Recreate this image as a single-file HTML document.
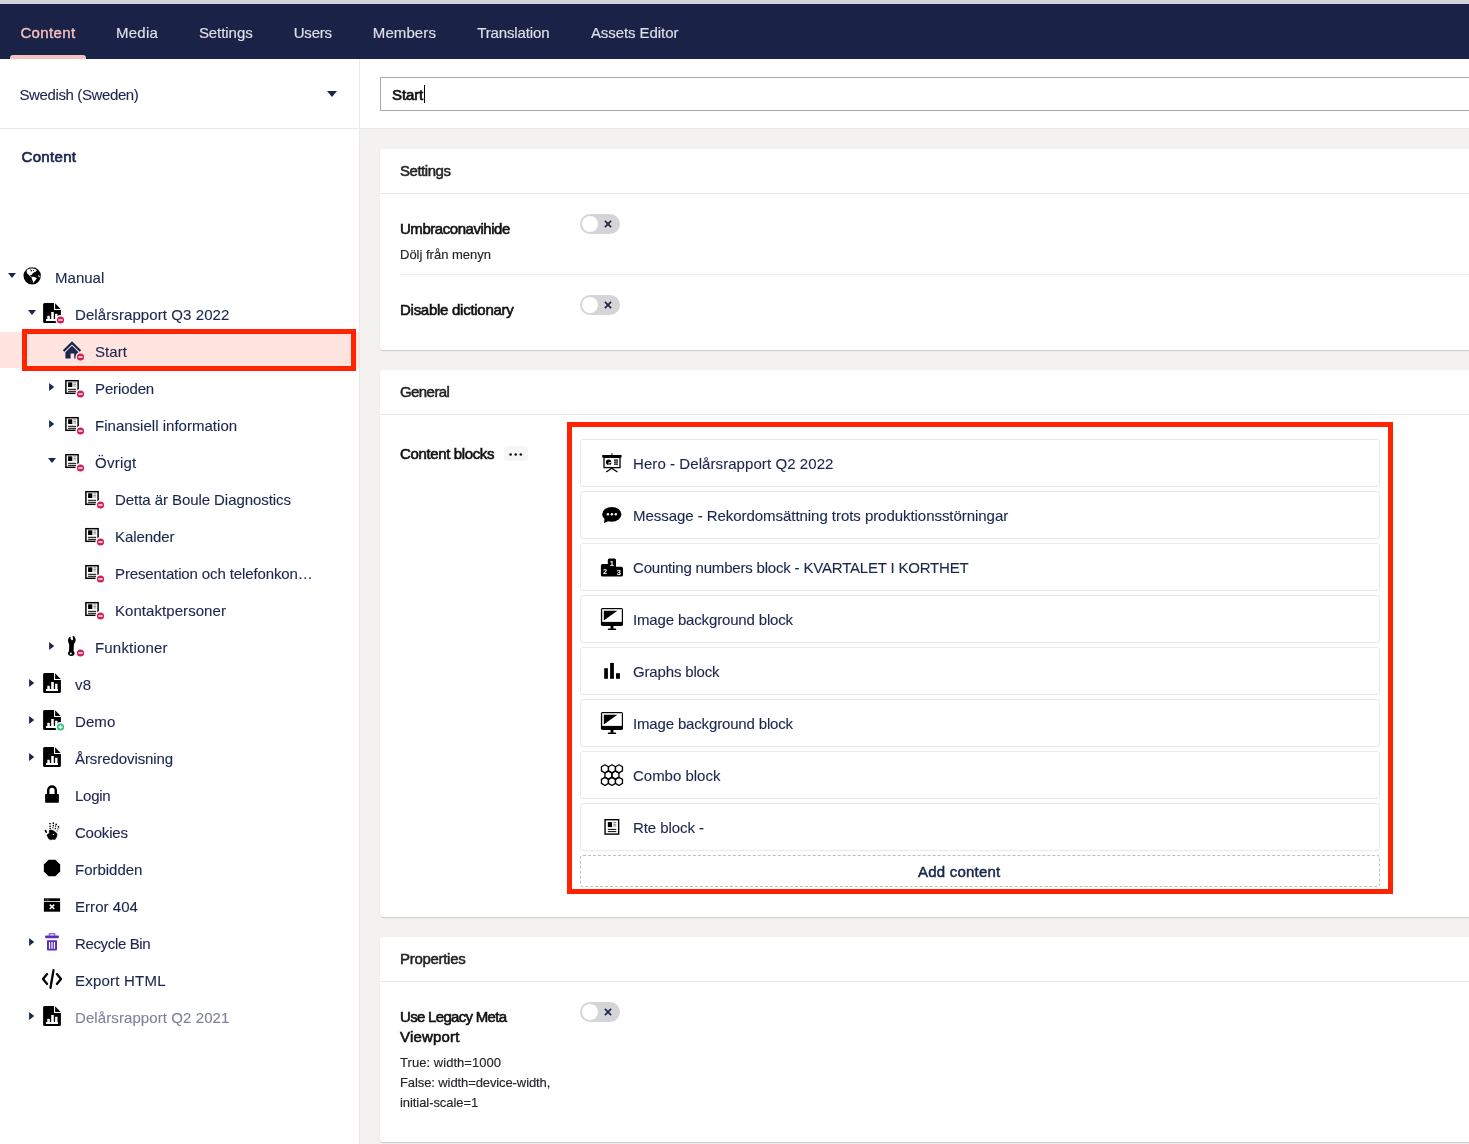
<!DOCTYPE html>
<html lang="en">
<head>
<meta charset="utf-8">
<title>Start - Umbraco</title>
<style>
*{box-sizing:border-box;margin:0;padding:0}
html,body{width:1469px;height:1144px;overflow:hidden;background:#f4f2f1}
#appheader,#sidebar,#tree,#main{will-change:transform}
body{font-family:"Liberation Sans",sans-serif;font-size:15px;color:#1b264f;position:relative}
#topstrip{position:absolute;left:0;top:0;width:1469px;height:4px;background:#d3d4da}
#appheader{position:absolute;left:0;top:4px;width:1469px;height:55px;background:#1b2248}
#appheader .tab{position:absolute;top:1px;height:55px;line-height:56px;color:#dfe0e6;font-size:15px;white-space:nowrap}
#appheader .tab{-webkit-text-stroke:0.15px}
#appheader .tab.active{color:#f5c1bc;-webkit-text-stroke:0.4px}
#appheader .bar{position:absolute;left:10px;top:51px;width:76px;height:4px;background:#f5c1bc;border-radius:3px 3px 0 0}
#sidebar{position:absolute;left:0;top:59px;width:360px;height:1085px;background:#fff;border-right:1px solid #e9e9eb}
#lang{position:absolute;left:0;top:0;width:359px;height:70px;border-bottom:1px solid #e9e9eb}
#lang span{position:absolute;left:19.5px;top:27px;line-height:18px;white-space:nowrap;-webkit-text-stroke:0.12px}
#lang i{position:absolute;left:327px;top:32px;width:0;height:0;border-left:5px solid transparent;border-right:5px solid transparent;border-top:6px solid #1b264f}
#treehead{position:absolute;left:21.5px;top:89px;line-height:18px;-webkit-text-stroke:0.7px #1b264f;white-space:nowrap}
#tree{position:absolute;left:0;top:0;width:359px;height:1144px}
#tree .lbl{position:absolute;line-height:18px;white-space:nowrap;-webkit-text-stroke:0.12px}
#tree .lbl.muted{color:#7d839a}
#tree .selrow{position:absolute;left:0;width:359px;height:36px;background:#ffe4e0}
svg.layer{position:absolute;left:0;top:0;overflow:visible}
#main{position:absolute;left:0;top:0;width:1469px;height:1144px;overflow:hidden;pointer-events:none}
#edhead{position:absolute;left:360px;top:59px;width:1109px;height:70px;background:#fff;border-bottom:1px solid #e9e9eb}
#nameinput{position:absolute;left:380px;top:77px;width:1200px;height:34px;border:1px solid #a9a9b3;background:#fff}
#nameinput span{position:absolute;left:11px;top:8px;line-height:18px;color:#111;-webkit-text-stroke:0.7px #111;white-space:nowrap}
#nameinput i{position:absolute;left:43px;top:7px;width:1px;height:18px;background:#000}
.panel{position:absolute;left:380px;width:1200px;background:#fff;border-radius:3px;box-shadow:0 1px 1px 0 rgba(0,0,0,.16)}
.panel .ph{position:absolute;left:0;top:0;width:100%;height:45px;border-bottom:1px solid #e9e9eb}
.panel .ph span{position:absolute;left:20px;top:13px;line-height:18px;font-size:15px;color:#222;-webkit-text-stroke:0.5px #222;white-space:nowrap}
.plabel{position:absolute;left:400px;font-size:15px;line-height:20px;color:#111;-webkit-text-stroke:0.6px #111;white-space:nowrap}
.pdesc{position:absolute;left:400px;font-size:13px;line-height:20px;color:#25252a;white-space:nowrap;-webkit-text-stroke:0.15px #25252a}
.sep{position:absolute;left:400px;height:1px;width:1100px;background:#f0f0f1}
.toggle{position:absolute;width:40px;height:20px;border-radius:10px;background:#d5d5d8}
.toggle b{position:absolute;left:2px;top:2px;width:16px;height:16px;border-radius:8px;background:#fff}
.toggle svg{position:absolute;left:24px;top:6px}
.dots{position:absolute;left:504px;top:446px;width:24px;height:15px;border-radius:3px;background:#f6f6f7}
.dots svg{position:absolute;left:0;top:0}
.blk{position:absolute;left:580px;width:800px;height:48px;border:1px solid #e9e9eb;border-radius:3px;background:#fff}
.blk span{position:absolute;left:52px;top:15px;line-height:18px;white-space:nowrap;-webkit-text-stroke:0.12px}
.addc{position:absolute;left:580px;top:855px;width:800px;height:32px;border:1px dashed #bdbdc4;border-radius:3px;text-align:center}
.addc span{position:absolute;left:337px;top:7px;line-height:18px;white-space:nowrap;-webkit-text-stroke:0.5px #1b264f}
.redbox{position:absolute;border:5px solid #ff2300}

</style>
</head>
<body>
<div id="topstrip"></div>
<div id="appheader">
  <div class="tab active" style="left:20.4px;letter-spacing:0.376px">Content</div>
  <div class="tab" style="left:116.0px;letter-spacing:0.25px">Media</div>
  <div class="tab" style="left:198.9px;letter-spacing:-0.058px">Settings</div>
  <div class="tab" style="left:293.7px;letter-spacing:-0.193px">Users</div>
  <div class="tab" style="left:372.8px;letter-spacing:0.097px">Members</div>
  <div class="tab" style="left:477.2px;letter-spacing:-0.126px">Translation</div>
  <div class="tab" style="left:590.9px;letter-spacing:-0.065px">Assets Editor</div>
  <div class="bar"></div>
</div>
<div id="sidebar">
  <div id="lang"><span style="letter-spacing:-0.384px">Swedish (Sweden)</span><i></i></div>
  <div id="treehead" style="letter-spacing:0.326px">Content</div>
</div>
<div id="tree">
<div class="lbl" style="left:55px;top:269px;letter-spacing:0.019px">Manual</div>
<div class="lbl" style="left:75px;top:306px;letter-spacing:0.09px">Delårsrapport Q3 2022</div>
<div class="selrow" style="top:332px"></div>
<div class="lbl" style="left:95px;top:343px;letter-spacing:0.053px">Start</div>
<div class="lbl" style="left:95px;top:380px;letter-spacing:-0.121px">Perioden</div>
<div class="lbl" style="left:95px;top:417px;letter-spacing:0.017px">Finansiell information</div>
<div class="lbl" style="left:95px;top:454px;letter-spacing:0.25px">Övrigt</div>
<div class="lbl" style="left:115px;top:491px;letter-spacing:-0.064px">Detta är Boule Diagnostics</div>
<div class="lbl" style="left:115px;top:528px;letter-spacing:-0.078px">Kalender</div>
<div class="lbl" style="left:115px;top:565px;letter-spacing:-0.117px">Presentation och telefonkon…</div>
<div class="lbl" style="left:115px;top:602px;letter-spacing:0.059px">Kontaktpersoner</div>
<div class="lbl" style="left:95px;top:639px;letter-spacing:0.181px">Funktioner</div>
<div class="lbl" style="left:75px;top:676px;letter-spacing:0.25px">v8</div>
<div class="lbl" style="left:75px;top:713px;letter-spacing:0.095px">Demo</div>
<div class="lbl" style="left:75px;top:750px;letter-spacing:-0.078px">Årsredovisning</div>
<div class="lbl" style="left:75px;top:787px;letter-spacing:-0.25px">Login</div>
<div class="lbl" style="left:75px;top:824px;letter-spacing:-0.217px">Cookies</div>
<div class="lbl" style="left:75px;top:861px;letter-spacing:-0.018px">Forbidden</div>
<div class="lbl" style="left:75px;top:898px;letter-spacing:0.046px">Error 404</div>
<div class="lbl" style="left:75px;top:935px;letter-spacing:-0.35px">Recycle Bin</div>
<div class="lbl" style="left:75px;top:972px;letter-spacing:0.214px">Export HTML</div>
<div class="lbl muted" style="left:75px;top:1009px;letter-spacing:0.09px">Delårsrapport Q2 2021</div>
<svg class="layer" width="360" height="1144" viewBox="0 0 360 1144">
<polygon points="8,273.0 16,273.0 12,278.1" fill="#1b264f"/>
<g transform="translate(32.2,275.8)"><circle r="8.7" fill="#000"/><path fill="#fff" d="M-5.7,-4.75L-4.5,-6.5L-2.2,-7.3L0.55,-7.2L3,-6.7L4.75,-5.6L3.7,-4.5L3.2,-3.8L1.9,-3.6L0.55,-2.65L-0.3,-1L-1.8,-0.85L-2.5,0L-5.05,-2.4Z"/><path stroke="#fff" stroke-width="0.8" fill="none" d="M-2.5,-0.2L-0.5,1.4"/><path fill="#fff" d="M-0.55,1.25L1.7,1L4.6,2.4L3.35,4.35L1.7,6.3L0.85,7.55L0.55,4.9L-0.4,2.95Z"/><circle cx="-0.9" cy="-5.1" r="0.75" fill="#000"/><circle cx="1.25" cy="-5.3" r="0.6" fill="#000"/><path d="M-2.6,-7.4L-1.6,-6.2" stroke="#000" stroke-width="0.7"/><path fill="#b0b0b0" d="M6.15,-1.25L7.1,-0.15L8.5,-0.15L8.1,1.4L6.4,1.4L5.9,0.4Z"/><path fill="none" stroke="#bbb" stroke-width="0.7" d="M-1.8,-8.2Q0,-8.9 1.8,-8.2"/></g>
<polygon points="28,310.0 36,310.0 32,315.1" fill="#1b264f"/>
<g transform="translate(52,313)"><path fill="#000" d="M-7.4,-10H2V-3H8.9V8.5Q8.9,10 7.4,10H-7.4Q-8.9,10 -8.9,8.5V-8.5Q-8.9,-10 -7.4,-10Z"/><path fill="#000" d="M3.1,-9.8L8.7,-4.1H3.1Z"/><path fill="#fff" d="M-4.7,2.7h2.5v3.5h-2.5zM-0.8,-1h2.6v7.2h-2.6zM3.1,0.8h2.4v5.4h-2.4zM-6,6.1H6V7.9H-6Z"/></g>
<circle cx="60.5" cy="320" r="5.1" fill="#fff"/><circle cx="60.5" cy="320" r="3.6" fill="#d42054"/><rect x="58.4" y="319.3" width="4.2" height="1.4" fill="#fff"/>
<g transform="translate(72,350)" fill="#1b264f"><path d="M0,-8.7L9.2,0.2L7.6,1.8L0,-5.6L-7.6,1.8L-9.2,0.2Z"/><path d="M0,-4.3L6.6,2.2V8.4H2.2V3.4H-1.4V8.4H-6.6V2.2Z"/></g>
<circle cx="80.5" cy="357" r="5.1" fill="#ffe4e0"/><circle cx="80.5" cy="357" r="3.6" fill="#d42054"/><rect x="78.4" y="356.3" width="4.2" height="1.4" fill="#fff"/>
<polygon points="49.1,382.9 54.2,387 49.1,391.1" fill="#1b264f"/>
<g transform="translate(72,387) scale(1.0)"><rect x="-6.1" y="-6.3" width="12.2" height="12.6" fill="#fff" stroke="#000" stroke-width="1.5"/><rect x="-3.9" y="-4.7" width="4.2" height="4.7" fill="#000"/><path stroke="#666" stroke-width="0.7" d="M1.4,-4.2H4.2M1.4,-2.6H4.2M1.4,-1H4.2"/><path stroke="#000" stroke-width="1" d="M-3.9,2.3H4.2M-3.9,4.3H4.2"/></g>
<circle cx="80.5" cy="394" r="5.1" fill="#fff"/><circle cx="80.5" cy="394" r="3.6" fill="#d42054"/><rect x="78.4" y="393.3" width="4.2" height="1.4" fill="#fff"/>
<polygon points="49.1,419.9 54.2,424 49.1,428.1" fill="#1b264f"/>
<g transform="translate(72,424) scale(1.0)"><rect x="-6.1" y="-6.3" width="12.2" height="12.6" fill="#fff" stroke="#000" stroke-width="1.5"/><rect x="-3.9" y="-4.7" width="4.2" height="4.7" fill="#000"/><path stroke="#666" stroke-width="0.7" d="M1.4,-4.2H4.2M1.4,-2.6H4.2M1.4,-1H4.2"/><path stroke="#000" stroke-width="1" d="M-3.9,2.3H4.2M-3.9,4.3H4.2"/></g>
<circle cx="80.5" cy="431" r="5.1" fill="#fff"/><circle cx="80.5" cy="431" r="3.6" fill="#d42054"/><rect x="78.4" y="430.3" width="4.2" height="1.4" fill="#fff"/>
<polygon points="48,458.0 56,458.0 52,463.1" fill="#1b264f"/>
<g transform="translate(72,461) scale(1.0)"><rect x="-6.1" y="-6.3" width="12.2" height="12.6" fill="#fff" stroke="#000" stroke-width="1.5"/><rect x="-3.9" y="-4.7" width="4.2" height="4.7" fill="#000"/><path stroke="#666" stroke-width="0.7" d="M1.4,-4.2H4.2M1.4,-2.6H4.2M1.4,-1H4.2"/><path stroke="#000" stroke-width="1" d="M-3.9,2.3H4.2M-3.9,4.3H4.2"/></g>
<circle cx="80.5" cy="468" r="5.1" fill="#fff"/><circle cx="80.5" cy="468" r="3.6" fill="#d42054"/><rect x="78.4" y="467.3" width="4.2" height="1.4" fill="#fff"/>
<g transform="translate(92,498) scale(1.0)"><rect x="-6.1" y="-6.3" width="12.2" height="12.6" fill="#fff" stroke="#000" stroke-width="1.5"/><rect x="-3.9" y="-4.7" width="4.2" height="4.7" fill="#000"/><path stroke="#666" stroke-width="0.7" d="M1.4,-4.2H4.2M1.4,-2.6H4.2M1.4,-1H4.2"/><path stroke="#000" stroke-width="1" d="M-3.9,2.3H4.2M-3.9,4.3H4.2"/></g>
<circle cx="100.5" cy="505" r="5.1" fill="#fff"/><circle cx="100.5" cy="505" r="3.6" fill="#d42054"/><rect x="98.4" y="504.3" width="4.2" height="1.4" fill="#fff"/>
<g transform="translate(92,535) scale(1.0)"><rect x="-6.1" y="-6.3" width="12.2" height="12.6" fill="#fff" stroke="#000" stroke-width="1.5"/><rect x="-3.9" y="-4.7" width="4.2" height="4.7" fill="#000"/><path stroke="#666" stroke-width="0.7" d="M1.4,-4.2H4.2M1.4,-2.6H4.2M1.4,-1H4.2"/><path stroke="#000" stroke-width="1" d="M-3.9,2.3H4.2M-3.9,4.3H4.2"/></g>
<circle cx="100.5" cy="542" r="5.1" fill="#fff"/><circle cx="100.5" cy="542" r="3.6" fill="#d42054"/><rect x="98.4" y="541.3" width="4.2" height="1.4" fill="#fff"/>
<g transform="translate(92,572) scale(1.0)"><rect x="-6.1" y="-6.3" width="12.2" height="12.6" fill="#fff" stroke="#000" stroke-width="1.5"/><rect x="-3.9" y="-4.7" width="4.2" height="4.7" fill="#000"/><path stroke="#666" stroke-width="0.7" d="M1.4,-4.2H4.2M1.4,-2.6H4.2M1.4,-1H4.2"/><path stroke="#000" stroke-width="1" d="M-3.9,2.3H4.2M-3.9,4.3H4.2"/></g>
<circle cx="100.5" cy="579" r="5.1" fill="#fff"/><circle cx="100.5" cy="579" r="3.6" fill="#d42054"/><rect x="98.4" y="578.3" width="4.2" height="1.4" fill="#fff"/>
<g transform="translate(92,609) scale(1.0)"><rect x="-6.1" y="-6.3" width="12.2" height="12.6" fill="#fff" stroke="#000" stroke-width="1.5"/><rect x="-3.9" y="-4.7" width="4.2" height="4.7" fill="#000"/><path stroke="#666" stroke-width="0.7" d="M1.4,-4.2H4.2M1.4,-2.6H4.2M1.4,-1H4.2"/><path stroke="#000" stroke-width="1" d="M-3.9,2.3H4.2M-3.9,4.3H4.2"/></g>
<circle cx="100.5" cy="616" r="5.1" fill="#fff"/><circle cx="100.5" cy="616" r="3.6" fill="#d42054"/><rect x="98.4" y="615.3" width="4.2" height="1.4" fill="#fff"/>
<polygon points="49.1,641.9 54.2,646 49.1,650.1" fill="#1b264f"/>
<g transform="translate(71.8,646)" fill="#000"><path d="M-3.7,-4.5C-3.9,-6.5 -3.3,-8 -2.3,-8.9L-1.3,-9.2L-1.2,-6.9L0.2,-5.6L1.3,-6.6L0.8,-9.7L1.6,-10.1C2.9,-9.4 3.7,-8.3 3.9,-6C3.8,-4.6 3.3,-3.6 2.1,-2L1.8,5.2C2.6,5.9 2.9,6.7 2.8,7.5C2.6,9.2 1.2,10 -0.4,10C-2.4,10 -3.8,9 -3.8,7.5C-3.8,6.4 -3.4,5.7 -2.8,5.2L-2.6,-2C-3.2,-2.8 -3.6,-3.6 -3.7,-4.5Z"/><circle cx="-1" cy="7.5" r="1" fill="#fff"/></g>
<circle cx="80.5" cy="653" r="5.1" fill="#fff"/><circle cx="80.5" cy="653" r="3.6" fill="#d42054"/><rect x="78.4" y="652.3" width="4.2" height="1.4" fill="#fff"/>
<polygon points="29.1,678.9 34.2,683 29.1,687.1" fill="#1b264f"/>
<g transform="translate(52,683)"><path fill="#000" d="M-7.4,-10H2V-3H8.9V8.5Q8.9,10 7.4,10H-7.4Q-8.9,10 -8.9,8.5V-8.5Q-8.9,-10 -7.4,-10Z"/><path fill="#000" d="M3.1,-9.8L8.7,-4.1H3.1Z"/><path fill="#fff" d="M-4.7,2.7h2.5v3.5h-2.5zM-0.8,-1h2.6v7.2h-2.6zM3.1,0.8h2.4v5.4h-2.4zM-6,6.1H6V7.9H-6Z"/></g>
<polygon points="29.1,715.9 34.2,720 29.1,724.1" fill="#1b264f"/>
<g transform="translate(52,720)"><path fill="#000" d="M-7.4,-10H2V-3H8.9V8.5Q8.9,10 7.4,10H-7.4Q-8.9,10 -8.9,8.5V-8.5Q-8.9,-10 -7.4,-10Z"/><path fill="#000" d="M3.1,-9.8L8.7,-4.1H3.1Z"/><path fill="#fff" d="M-4.7,2.7h2.5v3.5h-2.5zM-0.8,-1h2.6v7.2h-2.6zM3.1,0.8h2.4v5.4h-2.4zM-6,6.1H6V7.9H-6Z"/></g>
<circle cx="60.5" cy="727" r="5.1" fill="#fff"/><circle cx="60.5" cy="727" r="3.6" fill="#2bc37c"/><rect x="58.4" y="726.3" width="4.2" height="1.4" fill="#fff"/><rect x="59.8" y="724.9" width="1.4" height="4.2" fill="#fff"/>
<polygon points="29.1,752.9 34.2,757 29.1,761.1" fill="#1b264f"/>
<g transform="translate(52,757)"><path fill="#000" d="M-7.4,-10H2V-3H8.9V8.5Q8.9,10 7.4,10H-7.4Q-8.9,10 -8.9,8.5V-8.5Q-8.9,-10 -7.4,-10Z"/><path fill="#000" d="M3.1,-9.8L8.7,-4.1H3.1Z"/><path fill="#fff" d="M-4.7,2.7h2.5v3.5h-2.5zM-0.8,-1h2.6v7.2h-2.6zM3.1,0.8h2.4v5.4h-2.4zM-6,6.1H6V7.9H-6Z"/></g>
<g transform="translate(52,795)"><rect x="-6.9" y="-1" width="13.8" height="8.7" rx="0.9" fill="#000"/><path d="M-3.8,-0.5V-4.6a3.8,3.8 0 0 1 7.6,0V-0.5" fill="none" stroke="#000" stroke-width="2.5"/></g>
<g transform="translate(52,832)" fill="#000"><path d="M-2.85,-1.45L-1.45,-1.9L0.5,-1.7L2.2,-0.75L3.6,0.2L4.85,1.6L5,3.6L4.15,5.8L3,7.5L0.8,7.2L-1.45,7.8L-3.4,6.65L-4.25,4.7L-5.1,3.3L-4.25,2.2L-2.85,1.6L-2.6,0.2Z" stroke="#000" stroke-width="0.6" stroke-linejoin="round"/><ellipse cx="-6.2" cy="-0.6" rx="0.95" ry="1.7" transform="rotate(-28 -6.2 -0.6)"/><circle cx="1.35" cy="2.45" r="0.65" fill="#fff"/><ellipse cx="-2" cy="-8.45" rx="0.85" ry="0.89" opacity="1"/><ellipse cx="-1.9" cy="-5.65" rx="0.8" ry="0.84" opacity="1"/><ellipse cx="-1.9" cy="-3.55" rx="0.75" ry="0.79" opacity="1"/><ellipse cx="1.35" cy="-8.8" rx="0.85" ry="0.89" opacity="1"/><ellipse cx="1.35" cy="-6.5" rx="0.8" ry="0.84" opacity="1"/><ellipse cx="0.9" cy="-4.4" rx="0.85" ry="0.89" opacity="0.55"/><ellipse cx="4.15" cy="-7.6" rx="0.85" ry="0.89" opacity="1"/><ellipse cx="3.6" cy="-5.65" rx="0.7" ry="0.73" opacity="0.9"/><ellipse cx="3.3" cy="-3.5" rx="0.8" ry="0.84" opacity="0.9"/><ellipse cx="6.5" cy="-5.1" rx="0.9" ry="0.95" opacity="1"/><ellipse cx="5.8" cy="-3" rx="0.75" ry="0.79" opacity="0.75"/><ellipse cx="5.2" cy="-1.1" rx="0.7" ry="0.73" opacity="0.6"/></g>
<polygon points="48.6,859.85 55.4,859.85 60.15,864.6 60.15,871.4 55.4,876.15 48.6,876.15 43.85,871.4 43.85,864.6" fill="#000"/>
<g transform="translate(52,905)"><rect x="-8.1" y="-6.7" width="16.2" height="2.9" fill="#000"/><rect x="-8.1" y="-3" width="16.2" height="9.7" fill="#000"/><path d="M-6.6,-5.1h0.9M-5,-5.1h0.9M-3.4,-5.1h0.9" stroke="#aaa" stroke-width="0.9"/><path d="M-2.2,-0.4L2.2,4M2.2,-0.4L-2.2,4" stroke="#fff" stroke-width="1.5"/></g>
<polygon points="29.1,937.9 34.2,942 29.1,946.1" fill="#1b264f"/>
<g transform="translate(52,942)"><path d="M-2.6,-6V-8.2H2.6V-6" fill="none" stroke="#8f72d0" stroke-width="1.4"/><rect x="-6.9" y="-6.4" width="13.8" height="2.6" rx="1" fill="#5a2fb6"/><path d="M-5,-1.8H5V7.6Q5,8.6 4,8.6H-4Q-5,8.6 -5,7.6Z" fill="#5a2fb6"/><path d="M-2.45,0V6.8M0,0V6.8M2.45,0V6.8" stroke="#fff" stroke-width="1.2"/></g>
<g transform="translate(52,979)" fill="none" stroke="#000" stroke-width="2.3" stroke-linecap="round" stroke-linejoin="round"><path d="M-4.9,-4.9L-9,0L-4.9,4.9M4.9,-4.9L9,0L4.9,4.9M1.5,-8.8L-1.5,8.8"/></g>
<polygon points="29.1,1011.9 34.2,1016 29.1,1020.1" fill="#1b264f"/>
<g transform="translate(52,1016)"><path fill="#000" d="M-7.4,-10H2V-3H8.9V8.5Q8.9,10 7.4,10H-7.4Q-8.9,10 -8.9,8.5V-8.5Q-8.9,-10 -7.4,-10Z"/><path fill="#000" d="M3.1,-9.8L8.7,-4.1H3.1Z"/><path fill="#fff" d="M-4.7,2.7h2.5v3.5h-2.5zM-0.8,-1h2.6v7.2h-2.6zM3.1,0.8h2.4v5.4h-2.4zM-6,6.1H6V7.9H-6Z"/></g>
</svg>
</div>
<div id="main">
  <div id="edhead"></div>
  <div id="nameinput"><span style="letter-spacing:-0.097px">Start</span><i></i></div>

  <div class="panel" style="top:149px;height:201px"><div class="ph"><span style="letter-spacing:-0.472px">Settings</span></div></div>
  <div class="plabel" style="top:219px;letter-spacing:-0.46px">Umbraconavihide</div>
  <div class="pdesc" style="top:245px;letter-spacing:-0.003px">Dölj från menyn</div>
  <div class="toggle" style="left:580px;top:214px"><b></b><svg width="8" height="8" viewBox="0 0 8 8"><path d="M0.9,0.9L7.1,7.1M7.1,0.9L0.9,7.1" stroke="#1b264f" stroke-width="1.7"/></svg></div>
  <div class="sep" style="top:274px"></div>
  <div class="plabel" style="top:300px;letter-spacing:-0.27px">Disable dictionary</div>
  <div class="toggle" style="left:580px;top:295px"><b></b><svg width="8" height="8" viewBox="0 0 8 8"><path d="M0.9,0.9L7.1,7.1M7.1,0.9L0.9,7.1" stroke="#1b264f" stroke-width="1.7"/></svg></div>

  <div class="panel" style="top:370px;height:547px"><div class="ph"><span style="letter-spacing:-0.579px">General</span></div></div>
  <div class="plabel" style="top:444px;letter-spacing:-0.364px">Content blocks</div>
  <div class="dots"><svg width="24" height="15" viewBox="504 446 24 15"><circle cx="510.6" cy="454.5" r="1.3" fill="#111"/><circle cx="515.7" cy="454.5" r="1.3" fill="#111"/><circle cx="520.8" cy="454.5" r="1.3" fill="#111"/></svg></div>
<div class="blk" style="top:439px"><span style="letter-spacing:0.073px">Hero - Delårsrapport Q2 2022</span></div>
<div class="blk" style="top:491px"><span style="letter-spacing:-0.047px">Message - Rekordomsättning trots produktionsstörningar</span></div>
<div class="blk" style="top:543px"><span style="letter-spacing:-0.187px">Counting numbers block - KVARTALET I KORTHET</span></div>
<div class="blk" style="top:595px"><span style="letter-spacing:-0.159px">Image background block</span></div>
<div class="blk" style="top:647px"><span style="letter-spacing:-0.161px">Graphs block</span></div>
<div class="blk" style="top:699px"><span style="letter-spacing:-0.159px">Image background block</span></div>
<div class="blk" style="top:751px"><span style="letter-spacing:-0.015px">Combo block</span></div>
<div class="blk" style="top:803px"><span style="letter-spacing:-0.07px">Rte block -</span></div>
  <div class="addc"><span style="letter-spacing:0.214px">Add content</span></div>
  <svg class="layer" style="left:580px;top:430px" width="60" height="430" viewBox="580 430 60 430">
<g transform="translate(612,463)"><path d="M-0.1,-9.8V-7.6" stroke="#000" stroke-width="1"/><rect x="-9.8" y="-8" width="19.4" height="2.5" fill="#000"/><rect x="-8" y="-5.6" width="16" height="10.2" fill="#fff" stroke="#000" stroke-width="1.3"/><circle cx="-3.4" cy="-0.8" r="2.7" fill="#000"/><path d="M-3.4,-0.8V2.2H-0.4V-0.8Z" fill="#fff"/><path d="M-2.6,0H-0.6A2,2 0 0 1 -2.6,2Z" fill="#000"/><path d="M2,-2.9H6M2,-0.9H6M2,1.1H6" stroke="#000" stroke-width="1.1"/><path d="M-0.2,5.2L-5.8,9M-0.2,5.2L5.4,9" stroke="#000" stroke-width="1.3"/></g>
<g transform="translate(612,515)"><ellipse cx="-0.2" cy="-0.7" rx="9.6" ry="7.4" fill="#000"/><path d="M-7.4,3.4L-8,8L-2.6,5.8Z" fill="#000"/><circle cx="-4.1" cy="-0.7" r="1.2" fill="#fff"/><circle cx="-0.1" cy="-0.7" r="1.2" fill="#fff"/><circle cx="3.8" cy="-0.7" r="1.2" fill="#fff"/></g>
<g transform="translate(612,567)"><path fill="#000" d="M-2.7,-8.5H2.5Q4,-8.5 4,-7V-0.2H9.4Q11,-0.2 11,1.4V8Q11,9.6 9.4,9.6H-9.5Q-11.1,9.6 -11.1,8V-1.4Q-11.1,-3 -9.5,-3H-4.2V-7Q-4.2,-8.5 -2.7,-8.5Z"/><text x="-0.1" y="-1.2" font-family="Liberation Sans, sans-serif" font-size="7.5" font-weight="bold" fill="#fff" text-anchor="middle">1</text><text x="-7" y="7.4" font-family="Liberation Sans, sans-serif" font-size="7.5" font-weight="bold" fill="#fff" text-anchor="middle">2</text><text x="6.8" y="8" font-family="Liberation Sans, sans-serif" font-size="7.5" font-weight="bold" fill="#fff" text-anchor="middle">3</text></g>
<g transform="translate(612,619)"><rect x="-11.1" y="-11.1" width="22.1" height="18" rx="1.6" fill="#000"/><rect x="-9.8" y="-9.8" width="19.6" height="12.7" fill="#fff"/><path d="M-8.2,-8.2H5.4L-8.2,1.4Z" fill="#000"/><rect x="-1.5" y="6.8" width="3" height="3" fill="#000"/><rect x="-4.1" y="9.5" width="8.2" height="1.5" rx="0.6" fill="#000"/></g>
<g transform="translate(612,671)" fill="#000"><rect x="-7.8" y="-2.8" width="3.7" height="10.6"/><rect x="-1.9" y="-8.1" width="3.8" height="15.9"/><rect x="4" y="2.2" width="3.9" height="5.6"/></g>
<g transform="translate(612,723)"><rect x="-11.1" y="-11.1" width="22.1" height="18" rx="1.6" fill="#000"/><rect x="-9.8" y="-9.8" width="19.6" height="12.7" fill="#fff"/><path d="M-8.2,-8.2H5.4L-8.2,1.4Z" fill="#000"/><rect x="-1.5" y="6.8" width="3" height="3" fill="#000"/><rect x="-4.1" y="9.5" width="8.2" height="1.5" rx="0.6" fill="#000"/></g>
<g transform="translate(612,775)" fill="none" stroke="#000" stroke-width="1.3" stroke-linejoin="round"><polygon points="-7.05,-10.25 -3.54,-8.22 -3.54,-4.18 -7.05,-2.15 -10.56,-4.18 -10.56,-8.23"/><polygon points="-0.05,-10.25 3.46,-8.22 3.46,-4.18 -0.05,-2.15 -3.56,-4.18 -3.56,-8.23"/><polygon points="6.95,-10.25 10.46,-8.22 10.46,-4.18 6.95,-2.15 3.44,-4.18 3.44,-8.23"/><polygon points="-3.55,-3.95 -0.04,-1.92 -0.04,2.12 -3.55,4.15 -7.06,2.12 -7.06,-1.93"/><polygon points="3.45,-3.95 6.96,-1.92 6.96,2.12 3.45,4.15 -0.06,2.12 -0.06,-1.93"/><polygon points="-7.05,2.35 -3.54,4.38 -3.54,8.43 -7.05,10.45 -10.56,8.43 -10.56,4.38"/><polygon points="-0.05,2.35 3.46,4.38 3.46,8.43 -0.05,10.45 -3.56,8.43 -3.56,4.38"/><polygon points="6.95,2.35 10.46,4.38 10.46,8.43 6.95,10.45 3.44,8.43 3.44,4.38"/></g>
<g transform="translate(611.85,826.9)"><rect x="-6.8" y="-7.2" width="13.6" height="14.4" fill="#fff" stroke="#000" stroke-width="1.4"/><rect x="-4" y="-4.8" width="4.2" height="5" fill="#000"/><path stroke="#555" stroke-width="0.7" d="M1.4,-4.3H4.4M1.4,-2.6H4.4M1.4,-0.9H4.4"/><path stroke="#000" stroke-width="1" d="M-4,2.5H4.4M-4,4.7H4.4"/></g>
  </svg>

  <div class="panel" style="top:937px;height:205px"><div class="ph"><span style="letter-spacing:-0.297px">Properties</span></div></div>
  <div class="plabel" style="top:1007px"><span style="letter-spacing:-0.688px">Use Legacy Meta</span><br><span style="letter-spacing:0.187px">Viewport</span></div>
  <div class="pdesc" style="top:1053px"><span style="letter-spacing:0.05px">True: width=1000</span><br><span style="letter-spacing:-0.101px">False: width=device-width,</span><br><span style="letter-spacing:-0.066px">initial-scale=1</span></div>
  <div class="toggle" style="left:580px;top:1002px"><b></b><svg width="8" height="8" viewBox="0 0 8 8"><path d="M0.9,0.9L7.1,7.1M7.1,0.9L0.9,7.1" stroke="#1b264f" stroke-width="1.7"/></svg></div>
</div>
<div class="redbox" style="left:22px;top:329px;width:334px;height:42px"></div>
<div class="redbox" style="left:567px;top:422px;width:826px;height:472px"></div>
</body>
</html>
